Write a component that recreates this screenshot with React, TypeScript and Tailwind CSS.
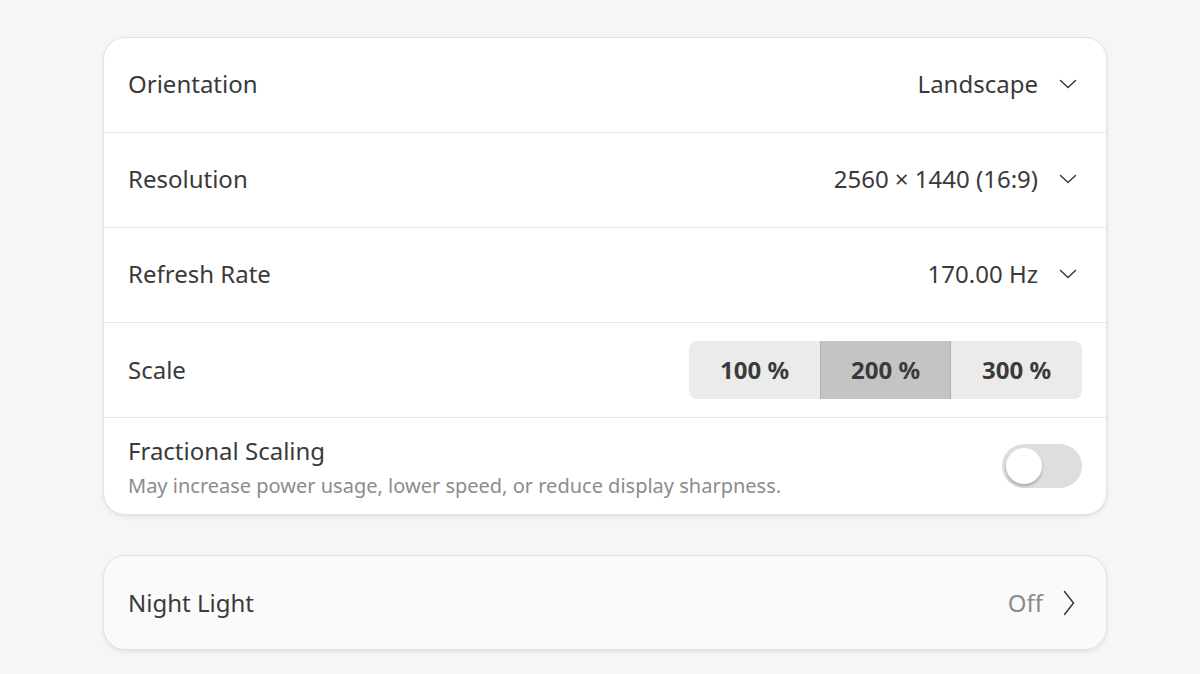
const font = { fontFamily: '"Noto Sans", "Open Sans", sans-serif' };

function DropArrow() {
    return (
        <svg width="18" height="10" viewBox="0 0 18 10" fill="none" className="text-[#3a3a3a]">
            <path d="M1.5 1.5 L9 8.5 L16.5 1.5" stroke="currentColor" strokeWidth="1.5" strokeLinecap="round" strokeLinejoin="round" />
        </svg>
    );
}

function Row({ label, value }: { label: string; value: string }) {
    return (
        <div className="h-[95px] flex items-center justify-between pl-[24px] pr-[29px] pb-[2px] border-b border-[#e8e8e8]">
            <span className="text-[24px] text-[#3a3a3a]">{label}</span>
            <div className="flex items-center gap-[21px]">
                <span className="text-[24px] text-[#3a3a3a]">{value}</span>
                <DropArrow />
            </div>
        </div>
    );
}

export default function App() {
    return (
        <div className="w-[1200px] h-[674px] bg-[#f6f6f6] pt-[37px] pl-[103px] overflow-hidden" style={font}>
            {/* Display settings */}
            <div className="w-[1004px] bg-white rounded-[22px] border border-[#e2e2e2] shadow-[0_2px_4px_rgba(0,0,0,0.08)] overflow-hidden">
                <Row label="Orientation" value="Landscape" />
                <Row label="Resolution" value="2560 × 1440 (16:9)" />
                <Row label="Refresh Rate" value="170.00 Hz" />

                {/* Scale */}
                <div className="h-[95px] flex items-center justify-between pl-[24px] pr-[24px] border-b border-[#e8e8e8]">
                    <span className="text-[24px] text-[#3a3a3a]">Scale</span>
                    <div className="flex h-[58px] rounded-[8px] overflow-hidden bg-[#ebebeb]">
                        <div className="w-[131px] flex items-center justify-center text-[24px] font-bold text-[#3a3a3a]">100 %</div>
                        <div className="w-[131px] flex items-center justify-center text-[24px] font-bold text-[#3a3a3a] bg-[#c4c4c4] border-x border-[#b0b0b0]">200 %</div>
                        <div className="w-[131px] flex items-center justify-center text-[24px] font-bold text-[#3a3a3a]">300 %</div>
                    </div>
                </div>

                {/* Fractional scaling */}
                <div className="h-[96px] flex items-center justify-between pl-[24px] pr-[24px]">
                    <div className="flex flex-col gap-[4px] pt-[3px]">
                        <span className="text-[24px] text-[#3a3a3a] leading-[32px]">Fractional Scaling</span>
                        <span className="text-[20px] text-[#8c8c8c] leading-[30px]">May increase power usage, lower speed, or reduce display sharpness.</span>
                    </div>
                    <div className="w-[80px] h-[44px] rounded-full bg-[#dedede] p-[4px] flex items-center">
                        <div className="w-[36px] h-[36px] rounded-full bg-white shadow-[0_2px_3px_rgba(0,0,0,0.25)]" />
                    </div>
                </div>
            </div>

            {/* Night light */}
            <div className="mt-[40px] w-[1004px] h-[95px] bg-[#fafafa] rounded-[22px] border border-[#e2e2e2] shadow-[0_2px_4px_rgba(0,0,0,0.08)] flex items-center justify-between pl-[24px] pr-[31px]">
                <span className="text-[24px] text-[#3a3a3a]">Night Light</span>
                <div className="flex items-center gap-[20px]">
                    <span className="text-[24px] text-[#8c8c8c]">Off</span>
                    <svg width="12" height="26" viewBox="0 0 12 26" fill="none" className="text-[#3a3a3a]">
                        <path d="M1.5 1.5 L10.5 13 L1.5 24.5" stroke="currentColor" strokeWidth="1.5" strokeLinecap="round" strokeLinejoin="round" />
                    </svg>
                </div>
            </div>
        </div>
    );
}
